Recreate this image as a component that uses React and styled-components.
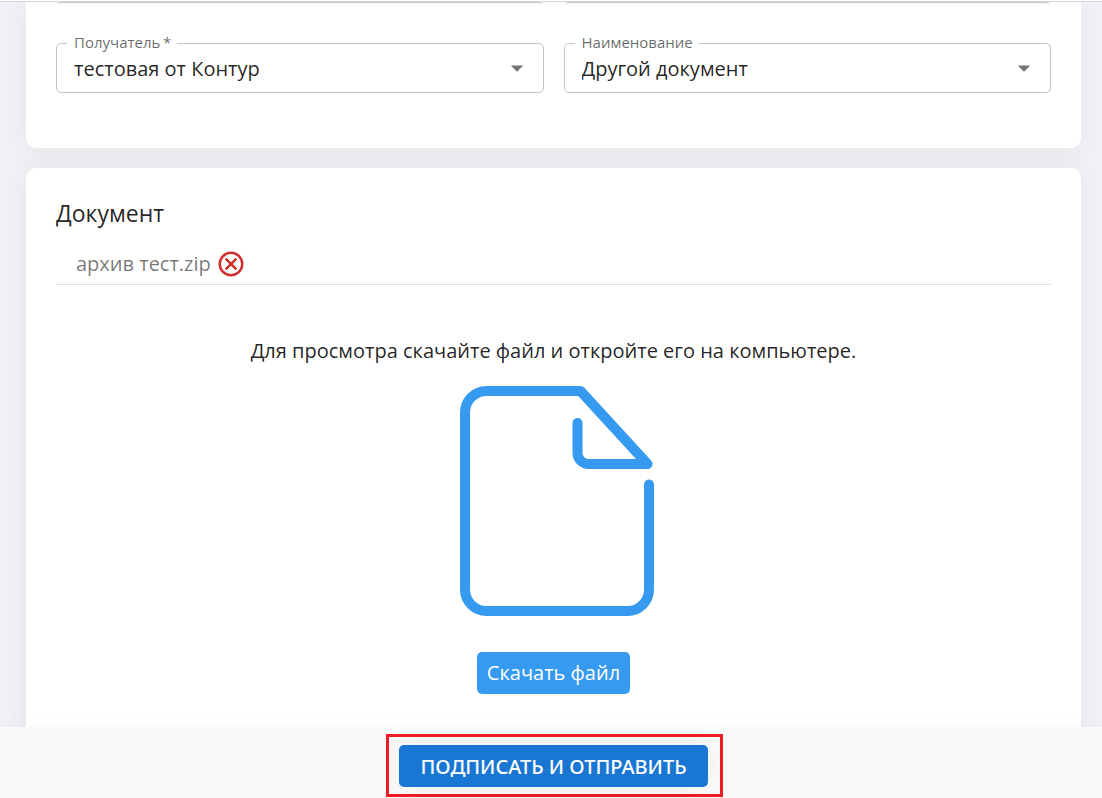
import { useState } from "react"
import styled, { createGlobalStyle } from "styled-components"

const GlobalStyle = createGlobalStyle`
  * {
    box-sizing: border-box;
  }
  body {
    margin: 0;
    font-family: "Open Sans", "Noto Sans", sans-serif;
    font-size: 20px;
    line-height: 30px;
    color: rgba(0, 0, 0, 0.87);
    background-color: #f1f2f6;
  }
  button, select {
    font: inherit;
  }
`

const Page = styled.div`
  display: flex;
  flex-direction: column;
  height: 100vh;
`

const TopBar = styled.header`
  flex: none;
  height: 2px;
  background-color: #fff;
  border-bottom: 1px solid #d5d6d5;
`

const Content = styled.main`
  flex: 1;
  min-height: 0;
  overflow: hidden;
  display: flex;
  flex-direction: column;
  gap: 20px;
  padding: 0 21px 0 26px;
`

const Card = styled.section`
  flex: none;
  padding: ${(props) => (props.$top ? "0 30px 55px" : "30px 30px 60px")};
  background-color: #fff;
  border-radius: ${(props) => (props.$top ? "0 0 10px 10px" : "10px")};
  box-shadow: 0 0 30px rgba(50, 50, 60, 0.07);
`

const FieldRow = styled.div`
  display: grid;
  grid-template-columns: 1fr 1fr;
  gap: 20px;
`

const ScrolledRow = styled(FieldRow)`
  height: 2px;
  margin-bottom: 29px;
  overflow: hidden;
  align-items: end;
`

const EmptyField = styled.div`
  height: 50px;
  border: 1px solid #c4c4c4;
  border-radius: 5px;
`

const Fieldset = styled.fieldset`
  min-width: 0;
  margin: 0;
  padding: 0;
  border: 1px solid #c4c4c4;
  border-radius: 5px;
`

const Legend = styled.legend`
  margin-left: 10px;
  padding: 0 6px 2px 7px;
  font-size: 15px;
  line-height: 18px;
  color: rgba(0, 0, 0, 0.6);
`

const Control = styled.div`
  display: grid;
  align-items: center;
  margin-top: -10px;
  > * {
    grid-area: 1 / 1;
  }
  svg {
    justify-self: end;
    margin-right: 11px;
    pointer-events: none;
  }
`

const Select = styled.select`
  width: 100%;
  height: 49px;
  padding: 2px 40px 0 17px;
  border: 0;
  background: transparent;
  color: inherit;
  appearance: none;
  cursor: pointer;
`

const Title = styled.h2`
  margin: 0;
  font-size: 23px;
  font-weight: 500;
  line-height: 30px;
`

const FileRow = styled.div`
  display: flex;
  align-items: center;
  gap: 5px;
  height: 43px;
  margin-top: 14px;
  padding: 2px 0 0 20px;
  border-bottom: 1px solid #e0e0e0;
  color: rgba(0, 0, 0, 0.54);
`

const RemoveButton = styled.button`
  display: flex;
  padding: 0;
  border: 0;
  background: none;
  color: #d32f2f;
  cursor: pointer;
`

const Preview = styled.div`
  display: flex;
  flex-direction: column;
  align-items: center;
  padding-top: 51px;
`

const Hint = styled.p`
  margin: 0 0 20px;
  text-align: center;
`

const DownloadButton = styled.button`
  margin-top: 36px;
  padding: 6px 10px;
  border: 0;
  border-radius: 5px;
  color: #fff;
  background-color: #369af0;
  cursor: pointer;
`

const BottomBar = styled.footer`
  position: relative;
  flex: none;
  display: flex;
  justify-content: center;
  padding: 7px 0 1px 7px;
  background-color: #fafafa;
  box-shadow: 0 0 14px rgba(0, 0, 0, 0.03);
`

const Highlight = styled.div`
  padding: 8px 12px 7px 10px;
  border: 3px solid #ee1c25;
`

const SubmitButton = styled.button`
  display: block;
  padding: 7px 21px 5px;
  border: 0;
  border-radius: 5px;
  font-family: "Noto Sans", "Open Sans", sans-serif;
  font-weight: 500;
  text-transform: uppercase;
  color: #fff;
  background-color: #1976d2;
  box-shadow: 0 0 25px rgba(0, 0, 0, 0.06);
  cursor: pointer;
`

const ArrowIcon = () => (
  <svg width="30" height="30" viewBox="0 0 24 24" fill="#757575" aria-hidden="true">
    <path d="M7 10l5 5 5-5z" />
  </svg>
)

const CancelIcon = () => (
  <svg
    width="30"
    height="30"
    viewBox="0 0 24 24"
    fill="none"
    stroke="currentColor"
    strokeWidth="2"
    aria-hidden="true"
  >
    <circle cx="12" cy="12" r="9" />
    <path d="M7.7 7.7l8.6 8.6M16.3 7.7l-8.6 8.6" />
  </svg>
)

const FileIcon = () => (
  <svg
    width="201"
    height="230"
    viewBox="0 0 201 230"
    fill="none"
    stroke="#369af0"
    strokeWidth="10"
    strokeLinecap="round"
    strokeLinejoin="round"
    aria-hidden="true"
  >
    <path d="M196 98.500V203.500a21.500 21.500 0 0 1-21.500 21.500H33.500A21.500 21.500 0 0 1 12 203.500V26.500A21.500 21.500 0 0 1 33.500 5H127.500L194.500 78H135.500A11 11 0 0 1 124.500 67V37" />
  </svg>
)

const SelectField = ({ id, label, required, options }) => {
  const [value, setValue] = useState(options[0])

  return (
    <Fieldset>
      <Legend>
        <label htmlFor={id}>
          {label}
          {required && "\u2009*"}
        </label>
      </Legend>
      <Control>
        <Select id={id} value={value} onChange={(e) => setValue(e.target.value)}>
          {options.map((option) => (
            <option key={option}>{option}</option>
          ))}
        </Select>
        <ArrowIcon />
      </Control>
    </Fieldset>
  )
}

const App = () => {
  return (
    <Page>
      <GlobalStyle />
      <TopBar />
      <Content>
        <Card $top>
          <ScrolledRow>
            <EmptyField />
            <EmptyField />
          </ScrolledRow>
          <FieldRow>
            <SelectField id="recipient" label="Получатель" required options={["тестовая от Контур"]} />
            <SelectField id="name" label="Наименование" options={["Другой документ"]} />
          </FieldRow>
        </Card>
        <Card>
          <Title>Документ</Title>
          <FileRow>
            <span>архив тест.zip</span>
            <RemoveButton type="button" aria-label="Удалить файл">
              <CancelIcon />
            </RemoveButton>
          </FileRow>
          <Preview>
            <Hint>Для просмотра скачайте файл и откройте его на компьютере.</Hint>
            <FileIcon />
            <DownloadButton type="button">Скачать файл</DownloadButton>
          </Preview>
        </Card>
      </Content>
      <BottomBar>
        <Highlight>
          <SubmitButton type="submit">Подписать и отправить</SubmitButton>
        </Highlight>
      </BottomBar>
    </Page>
  )
}

export default App
